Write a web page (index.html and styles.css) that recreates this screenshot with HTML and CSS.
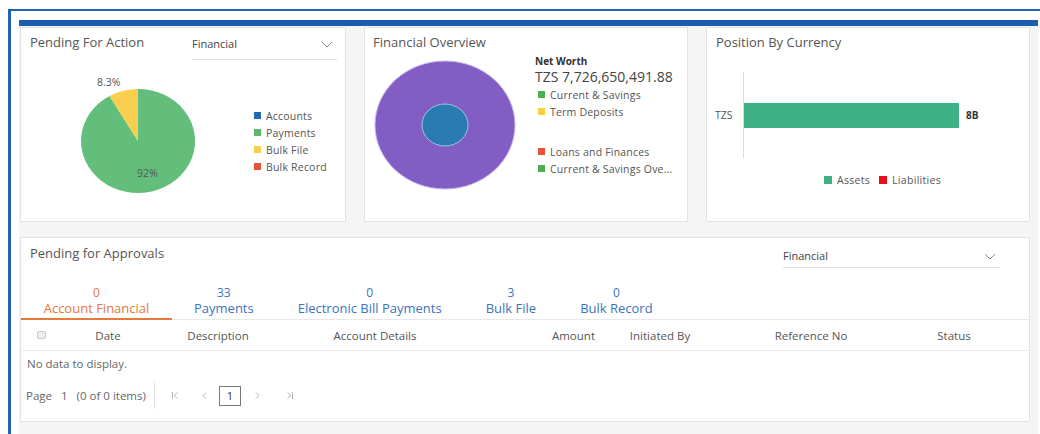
FILE: index.html
```html
<!DOCTYPE html>
<html lang="en">
<head>
<meta charset="utf-8">
<title>Dashboard</title>
<link rel="stylesheet" href="styles.css">
</head>
<body>
<div class="frame">
  <div class="dash">
    <div class="top-row">
      <!-- Pending For Action -->
      <section class="card card-action">
        <div class="card-head">
          <h2 class="card-title">Pending For Action</h2>
          <div class="select select-sm"><span>Financial</span><svg class="chev" width="12" height="7" viewBox="0 0 12 7"><path d="M1 1l5 5 5-5" fill="none" stroke="#888" stroke-width="1"/></svg></div>
        </div>
        <div class="action-body">
          <svg class="pie" width="180" height="140" viewBox="0 0 180 140">
            <path d="M90 69 L61.5 24 A57 52 0 1 0 90 17 Z" fill="#63be7b"/>
            <path d="M90 69 L90 17 A57 52 0 0 0 61.5 24 Z" fill="#f9cf4f"/>
            <text x="49" y="14" class="pie-label">8.3%</text>
            <text x="89" y="105" class="pie-label">92%</text>
          </svg>
          <ul class="legend">
            <li><i style="background:#1f6cb0"></i>Accounts</li>
            <li><i style="background:#5cb86a"></i>Payments</li>
            <li><i style="background:#f8d04a"></i>Bulk File</li>
            <li><i style="background:#e8533a"></i>Bulk Record</li>
          </ul>
        </div>
      </section>

      <!-- Financial Overview -->
      <section class="card card-overview">
        <div class="card-head">
          <h2 class="card-title">Financial Overview</h2>
        </div>
        <div class="overview-body">
          <svg class="donut" width="150" height="136" viewBox="0 0 150 136">
            <ellipse cx="75" cy="67" rx="70" ry="64" fill="#825dc4" stroke="#c9b6ee" stroke-width="1"/>
            <ellipse cx="75" cy="67" rx="23" ry="21" fill="#2a7bb2" stroke="#9ec1e4" stroke-width="1"/>
          </svg>
          <div class="networth">
            <div class="nw-label">Net Worth</div>
            <div class="nw-value">TZS 7,726,650,491.88</div>
            <ul class="legend legend-nw">
              <li><i style="background:#4caf50"></i>Current &amp; Savings</li>
              <li><i style="background:#f9cf3b"></i>Term Deposits</li>
              <li class="gap"><i style="background:#e8533a"></i>Loans and Finances</li>
              <li><i style="background:#4caf50"></i>Current &amp; Savings Ove...</li>
            </ul>
          </div>
        </div>
      </section>

      <!-- Position By Currency -->
      <section class="card card-position">
        <div class="card-head">
          <h2 class="card-title">Position By Currency</h2>
        </div>
        <svg class="bars" width="300" height="100" viewBox="0 0 300 100">
          <line x1="32.5" y1="7" x2="32.5" y2="93" stroke="#dcdcdc" stroke-width="1"/>
          <text x="4" y="54" class="axis-label">TZS</text>
          <rect x="33" y="38" width="215" height="25" fill="#3db085"/>
          <text x="255" y="54" class="bar-value">8B</text>
        </svg>
        <div class="bar-legend">
          <span><i style="background:#3db085"></i>Assets</span>
          <span><i style="background:#e8101a"></i>Liabilities</span>
        </div>
      </section>
    </div>

    <!-- Pending for Approvals -->
    <section class="card card-approvals">
      <div class="card-head">
        <h2 class="card-title">Pending for Approvals</h2>
        <div class="select select-lg"><span>Financial</span><svg class="chev" width="12" height="7" viewBox="0 0 12 7"><path d="M1 1l5 5 5-5" fill="none" stroke="#888" stroke-width="1"/></svg></div>
      </div>
      <div class="tabs">
        <div class="tab active"><span class="count">0</span><span class="name">Account Financial</span></div>
        <div class="tab"><span class="count">33</span><span class="name">Payments</span></div>
        <div class="tab"><span class="count">0</span><span class="name">Electronic Bill Payments</span></div>
        <div class="tab"><span class="count">3</span><span class="name">Bulk File</span></div>
        <div class="tab"><span class="count">0</span><span class="name">Bulk Record</span></div>
      </div>
      <div class="grid-head">
        <span class="c-chk"><i class="chk"></i></span>
        <span class="c-center">Date</span>
        <span class="c-center">Description</span>
        <span class="c-center">Account Details</span>
        <span class="c-right">Amount</span>
        <span class="c-center">Initiated By</span>
        <span class="c-center">Reference No</span>
        <span class="c-center">Status</span>
      </div>
      <div class="empty">No data to display.</div>
      <div class="pager">
        <span class="page-info"><span>Page</span><span class="pg-num">1</span><span>(0 of 0 items)</span></span>
        <span class="pager-sep"></span>
        <svg class="pg-btn pg-first" width="8" height="9" viewBox="0 0 8 9"><path d="M1.5 1v7M6.5 1.5L3 4.5l3.5 3" fill="none" stroke="#b4b4b4" stroke-width="1"/></svg>
        <svg class="pg-btn pg-prev" width="5" height="9" viewBox="0 0 5 9"><path d="M4 1.5L1 4.5l3 3" fill="none" stroke="#b4b4b4" stroke-width="1"/></svg>
        <span class="pg-current">1</span>
        <svg class="pg-btn pg-next" width="5" height="9" viewBox="0 0 5 9"><path d="M1 1.5l3 3-3 3" fill="none" stroke="#b4b4b4" stroke-width="1"/></svg>
        <svg class="pg-btn pg-last" width="8" height="9" viewBox="0 0 8 9"><path d="M1.5 1.5L5 4.5l-3.5 3M6.5 1v7" fill="none" stroke="#b4b4b4" stroke-width="1"/></svg>
      </div>
    </section>
  </div>
</div>
</body>
</html>
```

FILE: styles.css
```css
* { box-sizing: border-box; }

html, body {
  margin: 0;
  padding: 0;
  background: #ffffff;
  font-family: "Open Sans", "Liberation Sans", sans-serif;
  color: #555;
  overflow: hidden;
}

.frame {
  margin: 9px 0 0 8px;
  border-top: 2px solid #1f63b6;
  border-left: 3px solid #1f63b6;
  padding: 9px 0 0 8px;
  height: 440px;
}

.dash {
  margin-right: 2px;
  border-top: 6px solid #1a5db3;
  background: #f5f5f5;
  padding: 1px 8px 12px 1px;
  height: 420px;
}

.top-row {
  display: grid;
  grid-template-columns: 326px 324px 324px;
  column-gap: 18px;
  margin-bottom: 15px;
}

.card {
  background: #fff;
  border: 1px solid #e3e3e3;
  padding: 6px 9px 0 9px;
}

.top-row .card { height: 195px; }

.card-head {
  display: flex;
  justify-content: space-between;
  align-items: flex-start;
}

.card-title {
  margin: 0;
  font-size: 13px;
  line-height: 16px;
  font-weight: 400;
  color: #555;
}

.select {
  display: flex;
  justify-content: space-between;
  align-items: center;
  border-bottom: 1px solid #e2e2e2;
  font-size: 11px;
  color: #444;
  line-height: 14px;
  padding: 3px 4px 8px 0;
}

.select-sm { width: 145px; margin-right: -1px; }

.chev { display: block; }

/* Pending For Action */
.action-body {
  display: flex;
  align-items: flex-start;
  padding-top: 12px;
}

.pie { display: block; margin-left: 18px; }

.pie-label {
  font-family: "Open Sans", "Liberation Sans", sans-serif;
  font-size: 10.5px;
  fill: #555;
}

.legend {
  list-style: none;
  margin: 0;
  padding: 0;
  font-size: 10.5px;
  letter-spacing: 0.2px;
  color: #555;
}

.legend li {
  display: flex;
  align-items: center;
  height: 17px;
  white-space: nowrap;
}

.legend i {
  display: inline-block;
  width: 7px;
  height: 7px;
  margin-right: 5px;
  flex: none;
}

.card-action .legend {
  margin-left: 26px;
  margin-top: 35px;
}

/* Financial Overview */
.card-overview { padding-left: 8px; }

.overview-body {
  display: flex;
  align-items: flex-start;
}

.donut { display: block; margin-left: -3px; margin-top: 8px; }

.networth { margin-left: 15px; margin-top: 5px; }

.nw-label {
  font-size: 10px;
  font-weight: 700;
  color: #333;
  line-height: 13px;
}

.nw-value {
  font-size: 14px;
  color: #444;
  line-height: 17px;
}

.legend-nw { margin-top: 1px; margin-left: 3px; }
.legend-nw li.gap { margin-top: 23px; }

/* Position By Currency */
.bars { display: block; margin-left: -5px; margin-top: 15px; }

.axis-label {
  font-family: "Open Sans", "Liberation Sans", sans-serif;
  font-size: 10.5px;
  fill: #555;
}

.bar-value {
  font-family: "Open Sans", "Liberation Sans", sans-serif;
  font-size: 10px;
  font-weight: 700;
  fill: #333;
}

.bar-legend {
  display: flex;
  gap: 9px;
  margin-left: 108px;
  margin-top: 8px;
  font-size: 10.5px;
  letter-spacing: 0.3px;
  color: #555;
}

.bar-legend span { display: flex; align-items: center; }
.bar-legend i {
  display: inline-block;
  width: 8px;
  height: 8px;
  margin-right: 5px;
}

/* Pending for Approvals */
.card-approvals {
  height: 185px;
  padding: 7px 0 0 0;
}

.card-approvals .card-title { margin-left: 9px; }

.select-lg {
  width: 217px;
  margin-right: 29px;
  margin-top: 1px;
  padding-bottom: 4px;
}

.tabs {
  display: flex;
  margin-top: 17px;
  border-bottom: 1px solid #e8e8e8;
}

.tab {
  display: flex;
  flex-direction: column;
  align-items: center;
  padding: 0 22px 2px;
  color: #3a74bd;
  border-bottom: 2px solid transparent;
  margin-bottom: -1px;
  white-space: nowrap;
}

.tab .count { font-size: 12px; line-height: 15px; }
.tab .name { font-size: 13px; line-height: 16px; }

.tab.active {
  color: #e8773c;
  border-bottom-color: #e8773c;
}

.tab:nth-child(1) { width: 151px; }

.grid-head {
  display: grid;
  grid-template-columns: 40px 94px 126px 188px 131px 120px 182px 104px 1fr;
  height: 31px;
  align-items: center;
  border-bottom: 1px solid #ececec;
  font-size: 11.5px;
  color: #555;
}

.c-center { text-align: center; white-space: nowrap; }
.c-right { text-align: right; padding-right: 5px; }
.c-chk { display: flex; justify-content: center; }

.chk {
  display: block;
  width: 9px;
  height: 8px;
  border: 1px solid #c8c8c8;
  border-radius: 2px;
  background: #ededed;
}

.empty {
  font-size: 11.5px;
  color: #666;
  line-height: 14px;
  padding: 6px 0 0 6px;
}

.pager {
  display: flex;
  align-items: center;
  margin-top: 11px;
  padding-left: 5px;
  height: 27px;
  font-size: 11.5px;
  color: #666;
}

.page-info { display: flex; white-space: nowrap; }
.pg-num { margin: 0 9px 0 9px; }

.pager-sep {
  width: 1px;
  height: 27px;
  background: #e4e4e4;
  margin-left: 8px;
}

.pg-btn { display: block; flex: none; }

.pg-first { margin-left: 16px; }
.pg-prev { margin-left: 23px; }
.pg-next { margin-left: 14px; }
.pg-last { margin-left: 26px; }

.pg-current {
  width: 22px;
  height: 20px;
  border: 1px solid #777;
  display: flex;
  align-items: center;
  justify-content: center;
  color: #333;
  font-size: 11px;
  margin-left: 12px;
}
```
